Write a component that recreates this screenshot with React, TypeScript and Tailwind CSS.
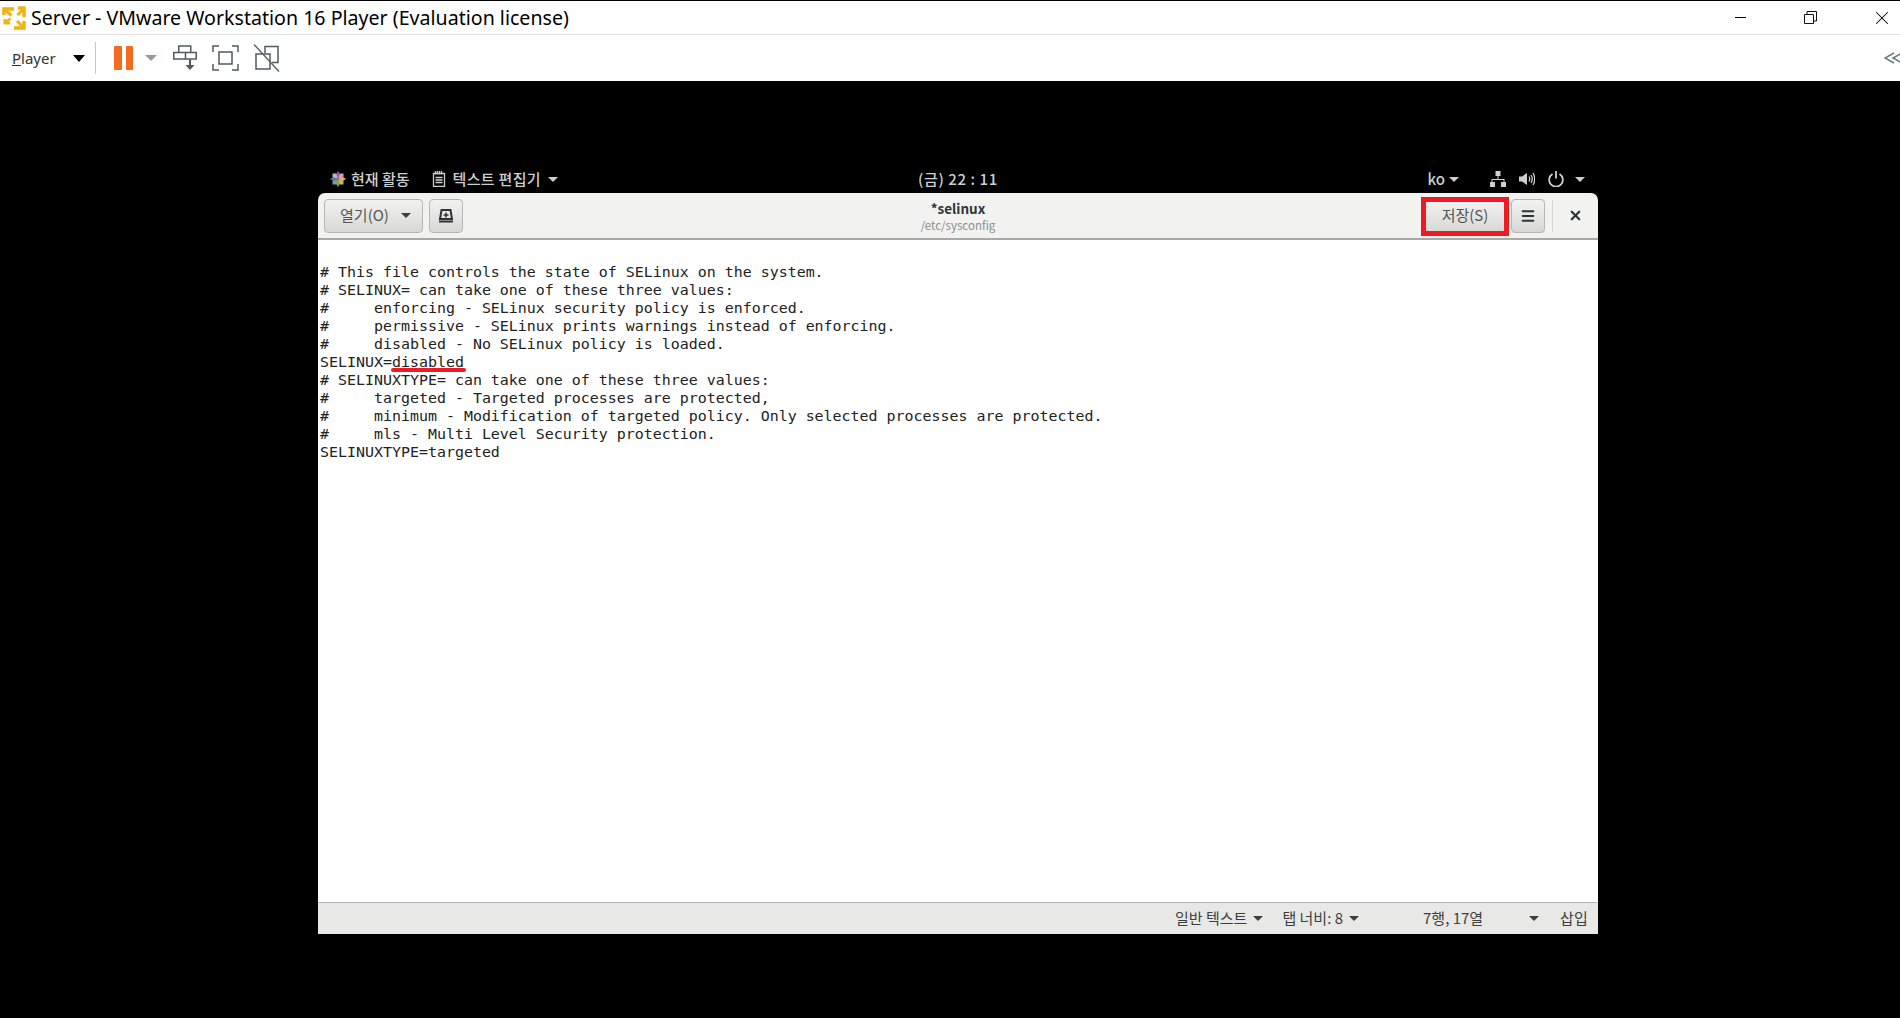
import { Menu, X } from 'lucide-react';

const SANS = 'font-["Noto_Sans_CJK_KR","Noto_Sans",sans-serif]';

const LINES_TOP = [
    '# This file controls the state of SELinux on the system.',
    '# SELINUX= can take one of these three values:',
    '#     enforcing - SELinux security policy is enforced.',
    '#     permissive - SELinux prints warnings instead of enforcing.',
    '#     disabled - No SELinux policy is loaded.',
];

const LINES_BOTTOM = [
    '# SELINUXTYPE= can take one of these three values:',
    '#     targeted - Targeted processes are protected,',
    '#     minimum - Modification of targeted policy. Only selected processes are protected.',
    '#     mls - Multi Level Security protection.',
    'SELINUXTYPE=targeted',
];

function Caret({ className }: { className: string }) {
    return <span className={`inline-block w-0 h-0 border-x-[5px] border-x-transparent border-t-[5px] ${className}`} />;
}

function VmLogo() {
    return (
        <svg width="24" height="24" viewBox="0 0 24 24" className="shrink-0" fill="none" stroke="#f0b310" strokeWidth="3.5">
            <path d="M12 3H2v6" />
            <path d="M2.500 3.500l7 6" strokeWidth="3" />
            <path d="M22 11V2h-6" />
            <path d="M21.500 3l-6 6" strokeWidth="3" />
            <path d="M12 22h10v-7" />
            <path d="M21 21l-6-6" strokeWidth="3" />
            <path d="M8 17H3v-4" strokeWidth="3" />
            <path d="M3.500 16.500l5-4" strokeWidth="2.500" />
        </svg>
    );
}

function ToolbarIcons() {
    return (
        <div className="flex items-center">
            <div className="flex gap-[4px]">
                <span className="w-[8px] h-[24px] bg-[#f26b21] rounded-[1px]" />
                <span className="w-[7px] h-[24px] bg-[#f26b21] rounded-[1px]" />
            </div>
            <Caret className="ml-[12px] border-t-[#9a9a9a] border-x-[6px] border-t-[6px]" />
            <svg width="24" height="26" viewBox="0 0 24 26" className="ml-[16px]" fill="none" stroke="#4f5a64" strokeWidth="1.500">
                <path d="M5.750 1h12v6.500h-12z M0.750 7.500h22.500v6.500H0.750z M12.500 7.500v6.500" />
                <path d="M17 14.500v7" strokeWidth="2" />
                <path d="M12.500 20l4.500 5 4.500-5z" fill="#4f5a64" stroke="none" />
            </svg>
            <svg width="27" height="26" viewBox="0 0 27 26" className="ml-[15px]" fill="none" stroke="#4f5a64" strokeWidth="1.500">
                <path d="M1 7V1h6 M20 1h6v6 M26 19v6h-6 M7 25H1v-6" />
                <path d="M7 7h13v12H7z" />
            </svg>
            <svg width="27" height="28" viewBox="0 0 27 28" className="ml-[14px]" fill="none" stroke="#4f5a64" strokeWidth="1.500">
                <path d="M12 9V2.500h13v16h-6 M3 10h14v15H3z" />
                <path d="M1 0.500l25 27" stroke="#5c6670" />
            </svg>
        </div>
    );
}

function GnomeBar() {
    return (
        <div className={`h-[28px] grid grid-cols-[1fr_auto_1fr] items-center text-[15px] text-[#cfcfcf] font-medium ${SANS}`}>
            <div className="flex items-center pl-[12px]">
                <svg width="16" height="16" viewBox="0 0 16 16" className="shrink-0">
                    <path d="M8 0l2.200 3.500L8 8 5.800 3.500z" fill="#9c5aa8" />
                    <path d="M16 8l-3.500 2.200L8 8l4.500-2.200z" fill="#e9b44c" />
                    <path d="M8 16l-2.200-3.500L8 8l2.200 4.500z" fill="#8aa84b" />
                    <path d="M0 8l3.500-2.200L8 8l-4.500 2.200z" fill="#4d78b0" />
                    <path d="M2.500 2.500h3.500L8 8 2.500 6z" fill="#b8b8c8" />
                    <path d="M13.500 2.500V6L8 8l2-5.500z" fill="#d9a0b0" />
                    <path d="M13.500 13.500H10L8 8l5.500 2z" fill="#c4b870" />
                    <path d="M2.500 13.500V10L8 8l-2 5.500z" fill="#7fa090" />
                </svg>
                <span className="ml-[5px]">현재 활동</span>
                <svg width="14" height="16" viewBox="0 0 14 16" className="ml-[22px] shrink-0" fill="none" stroke="#cfcfcf" strokeWidth="1.300">
                    <path d="M1.500 2.500h11v13h-11z M3.500 6.500h7 M3.500 9h7 M3.500 11.500h7 M3.500 0v3.500 M5.500 0v3.500 M7.500 0v3.500 M9.500 0v3.500" />
                </svg>
                <span className="ml-[7px] tracking-[0.3px]">텍스트 편집기</span>
                <Caret className="ml-[7px] border-t-[#cfcfcf]" />
            </div>
            <span className="tracking-[0.6px]">(금) 22 : 11</span>
            <div className="flex items-center justify-end pr-[13px]">
                <span>ko</span>
                <Caret className="ml-[4px] border-t-[#cfcfcf]" />
                <svg width="16" height="16" viewBox="0 0 16 16" className="ml-[31px]" fill="#cfcfcf">
                    <path d="M5.500 0h5v5h-5z M0 11h5v5H0z M11 11h5v5h-5z M7.500 5h1v3h6v3h-1V9h-11v2h-1V8h6z" />
                </svg>
                <svg width="16" height="16" viewBox="0 0 16 16" className="ml-[13px]" fill="none" stroke="#cfcfcf" strokeWidth="1.300">
                    <path d="M0 5.500h3L8 2v12L3 10.500H0z" fill="#cfcfcf" stroke="none" />
                    <path d="M10 5.500q1.500 2.500 0 5 M12 4q2.500 4 0 8 M14 2q3.500 6 0 12" />
                </svg>
                <svg width="16" height="16" viewBox="0 0 16 16" className="ml-[13px]" fill="none" stroke="#cfcfcf" strokeWidth="1.800">
                    <path d="M4.500 3a6.800 6.800 0 1 0 7 0 M8 0v7.500" />
                </svg>
                <Caret className="ml-[11px] border-t-[#cfcfcf]" />
            </div>
        </div>
    );
}

function HeaderBar() {
    const btn = 'border border-[#b6b6b3] rounded-[4px] bg-gradient-to-b from-[#f2f2f1] to-[#d8d8d5] flex items-center justify-center h-[34px]';
    return (
        <div className={`h-[47px] bg-[#f2f2f1] border-b-2 border-[#a9a9a6] rounded-t-[7px] grid grid-cols-[1fr_auto_1fr] items-center text-[15px] text-[#3d3f3f] ${SANS}`}>
            <div className="flex items-center pl-[6px]">
                <div className={`${btn} w-[99px] pl-[4px]`}>
                    <span className="text-[#555]">열기(O)</span>
                    <Caret className="ml-[12px] border-t-[#3d3f3f]" />
                </div>
                <div className={`${btn} w-[34px] ml-[6px]`}>
                    <svg width="16" height="14" viewBox="0 0 16 14" fill="none" stroke="#2e3436" strokeWidth="2">
                        <path d="M3.500 1h9l1.500 9H2z M1 12.500h14" />
                        <path d="M8 3.500v5 M5.500 6h5" strokeWidth="1.500" />
                    </svg>
                </div>
            </div>
            <div className="flex flex-col items-center leading-none">
                <span className="text-[13.500px] font-semibold text-[#2e3436] leading-[18px]">*selinux</span>
                <span className="text-[11.500px] text-[#8b8e8f] leading-[16px]">/etc/sysconfig</span>
            </div>
            <div className="flex items-center justify-end">
                <div className="relative">
                    <div className={`${btn} w-[80px] text-[#555]`}>저장(S)</div>
                    <div className="absolute -left-[4px] -top-[2px] w-[88px] h-[39px] border-[5px] border-[#ed1c24]" />
                </div>
                <div className={`${btn} w-[34px] ml-[6px]`}>
                    <Menu size={16} strokeWidth={3} color="#2e3436" />
                </div>
                <div className="w-px h-[32px] bg-[#d9d9d6] ml-[7px]" />
                <div className="w-[45px] flex justify-center">
                    <X size={15} strokeWidth={3.500} color="#2e3436" />
                </div>
            </div>
        </div>
    );
}

function Editor() {
    return (
        <div className="flex-1 bg-white pt-[23px] pl-[2px] font-['DejaVu_Sans_Mono',monospace] text-[14.950px] leading-[18px] text-[#222] whitespace-pre">
            {LINES_TOP.map((line) => (
                <div key={line}>{line}</div>
            ))}
            <div className="relative">
                SELINUX=disabled
                <span className="absolute left-[71px] top-[15px] w-[75px] h-[4px] rounded-full bg-[#ed1c24]" />
            </div>
            {LINES_BOTTOM.map((line) => (
                <div key={line}>{line}</div>
            ))}
        </div>
    );
}

function StatusBar() {
    return (
        <div className={`h-[32px] bg-[#e8e8e7] border-t border-[#b5b5b2] flex items-center pl-[857px] text-[15px] text-[#3d3f3f] ${SANS}`}>
            <span>일반 텍스트</span>
            <Caret className="ml-[6px] border-t-[#3d3f3f]" />
            <span className="ml-[19px]">탭 너비: 8</span>
            <Caret className="ml-[6px] border-t-[#3d3f3f]" />
            <span className="ml-[64px]">7행, 17열</span>
            <Caret className="ml-[46px] border-t-[#3d3f3f]" />
            <span className="ml-[21px]">삽입</span>
        </div>
    );
}

export default function App() {
    return (
        <div className="w-[1900px] h-[1018px] bg-black flex flex-col overflow-hidden">
            <div className="h-[35px] shrink-0 bg-white border-t border-black border-b border-b-[#e2e2e2] flex items-center pl-[2px] font-['Noto_Sans',sans-serif] text-[19.600px] text-black">
                <VmLogo />
                <span className="ml-[5px]">Server - VMware Workstation 16 Player (Evaluation license)</span>
                <div className="ml-auto flex items-center">
                    <span className="w-[11px] h-px bg-black" />
                    <svg width="13" height="13" viewBox="0 0 13 13" className="ml-[58px]" fill="none" stroke="#111" strokeWidth="1">
                        <path d="M0.500 3.500h9v9h-9z M3 3.500V0.500h9.500v9.500H9.500" />
                    </svg>
                    <X size={22} strokeWidth={1.100} color="#000" className="ml-[54px] mr-[7px]" />
                </div>
            </div>
            <div className="h-[46px] shrink-0 bg-white flex items-center pl-[12px] font-['Noto_Sans',sans-serif] text-[15px] text-[#333]">
                <span>
                    <span className="underline">P</span>layer
                </span>
                <Caret className="ml-[17px] border-t-black border-x-[6px] border-t-[7px]" />
                <div className="w-px h-[32px] bg-[#c8c8c8] ml-[10px] mr-[18px]" />
                <ToolbarIcons />
                <svg width="16" height="12" viewBox="0 0 16 12" className="ml-auto" fill="none" stroke="#6a7780" strokeWidth="1.500">
                    <path d="M10 1L1 6l9 5 M18 1L9 6l9 5" />
                </svg>
            </div>
            <div className="flex-1 flex flex-col pl-[318px] pr-[302px] pt-[84px] pb-[84px]">
                <GnomeBar />
                <div className="flex-1 flex flex-col min-h-0">
                    <HeaderBar />
                    <Editor />
                    <StatusBar />
                </div>
            </div>
        </div>
    );
}
